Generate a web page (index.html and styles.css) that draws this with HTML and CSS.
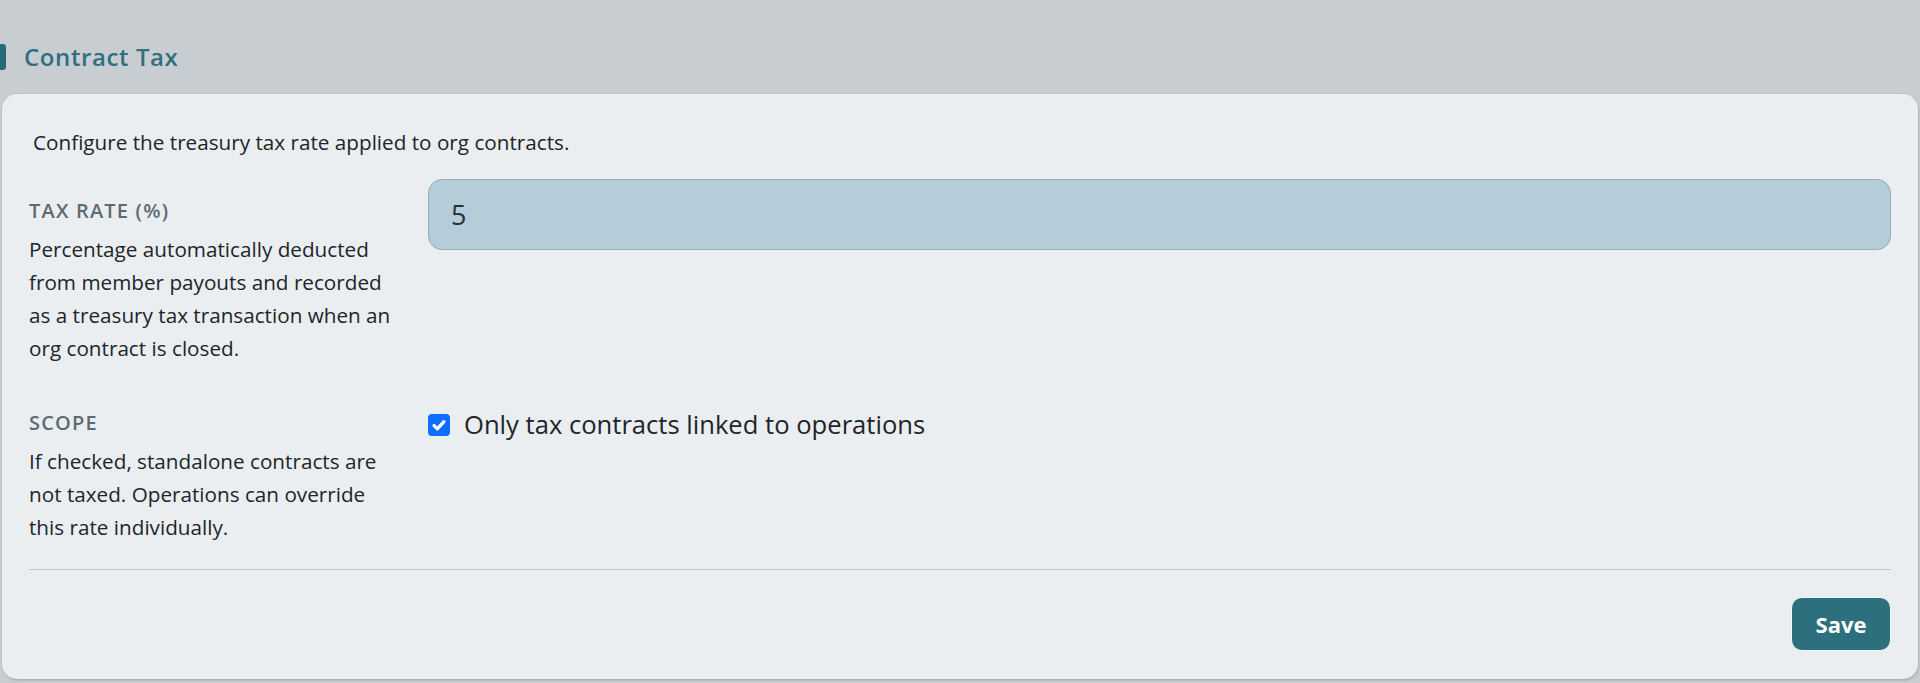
FILE: index.html
```html
<!DOCTYPE html>
<html lang="en">
<head>
<meta charset="utf-8">
<title>Contract Tax</title>
<link rel="stylesheet" href="styles.css">
</head>
<body>
<section class="section">
  <h2 class="section-title"><span class="title-bar"></span><span class="title-text">Contract Tax</span></h2>
  <div class="card">
    <p class="intro">Configure the treasury tax rate applied to org contracts.</p>
    <div class="settings">
      <div class="field-info">
        <label class="field-label" for="taxRate">TAX RATE (%)</label>
        <p class="field-help">Percentage automatically deducted from member payouts and recorded as a treasury tax transaction when an org contract is closed.</p>
      </div>
      <div class="field-control">
        <input class="text-input" id="taxRate" type="text" value="5">
      </div>
      <div class="field-info">
        <div class="field-label">SCOPE</div>
        <p class="field-help">If checked, standalone contracts are not taxed. Operations can override this rate individually.</p>
      </div>
      <div class="field-control check-control">
        <label class="check">
          <input class="check-input" type="checkbox" checked>
          <span class="check-label">Only tax contracts linked to operations</span>
        </label>
      </div>
    </div>
    <div class="card-footer">
      <button class="btn-save" type="button">Save</button>
    </div>
  </div>
</section>
</body>
</html>
```

FILE: styles.css
```css
html, body {
  margin: 0;
  padding: 0;
}
body {
  background: #c8cdd1;
  font-family: "Open Sans", "Noto Sans", "Liberation Sans", sans-serif;
  color: #212529;
  height: 683px;
  overflow: hidden;
}
.section {
  padding-top: 40px;
}
.section-title {
  display: flex;
  align-items: center;
  gap: 18px;
  margin: 0;
  height: 33px;
  font-size: 24px;
  font-weight: 600;
  letter-spacing: 0.6px;
  color: #2f6f80;
  line-height: 33px;
}
.title-bar {
  display: block;
  width: 6px;
  height: 26px;
  background: #28697a;
  border-radius: 0 3px 3px 0;
}
.card {
  margin: 21px 2px 0 2px;
  background: #eaeef1;
  border-radius: 15px;
  box-shadow: 1px 2px 2px rgba(0, 0, 0, 0.10), 0 0 0 1px rgba(0, 0, 0, 0.04);
  padding: 32px 27px 28px 27px;
}
.intro {
  margin: 0 0 20px 4px;
  font-size: 20.7px;
  line-height: 33px;
}
.settings {
  display: grid;
  grid-template-columns: 365px 1fr;
  column-gap: 34px;
  row-gap: 26px;
}
.field-info {
  padding-top: 20px;
}
.field-label {
  display: block;
  font-size: 20px;
  line-height: 24px;
  font-weight: 600;
  letter-spacing: 1.2px;
  color: #5e6a72;
}
.field-help {
  margin: 10px 0 0 0;
  font-size: 20.7px;
  line-height: 33px;
}
.text-input {
  display: block;
  box-sizing: border-box;
  width: 100%;
  height: 71px;
  margin: 0;
  padding: 0 22px;
  border: 1px solid #93acb8;
  border-radius: 14px;
  background: #b4cdd8;
  font-family: inherit;
  font-size: 27px;
  color: #2b3035;
  outline: none;
}
.check-control {
  padding-top: 16px;
}
.check {
  display: flex;
  align-items: center;
  gap: 14px;
  height: 36px;
}
.check-input {
  appearance: none;
  -webkit-appearance: none;
  margin: 0;
  width: 22px;
  height: 22px;
  border-radius: 4px;
  background-color: #0d6efd;
  background-image: url("data:image/svg+xml,%3csvg xmlns='http://www.w3.org/2000/svg' viewBox='0 0 20 20'%3e%3cpath fill='none' stroke='%23fff' stroke-linecap='round' stroke-linejoin='round' stroke-width='3' d='m5.5 10.5 3 3 6-6.5'/%3e%3c/svg%3e");
  background-size: 100% 100%;
  flex: none;
}
.check-label {
  font-size: 25.6px;
  line-height: 36px;
  color: #212529;
}
.card-footer {
  margin-top: 25px;
  border-top: 1px solid #c2c7cb;
  padding-top: 27px;
  display: flex;
  justify-content: flex-end;
}
.btn-save {
  width: 100px;
  height: 54px;
  border: 1px solid #f4f7f9;
  border-radius: 11px;
  background: #2c6f7d;
  color: #ffffff;
  font-family: inherit;
  font-size: 22px;
  font-weight: 700;
  padding: 0;
}
```
